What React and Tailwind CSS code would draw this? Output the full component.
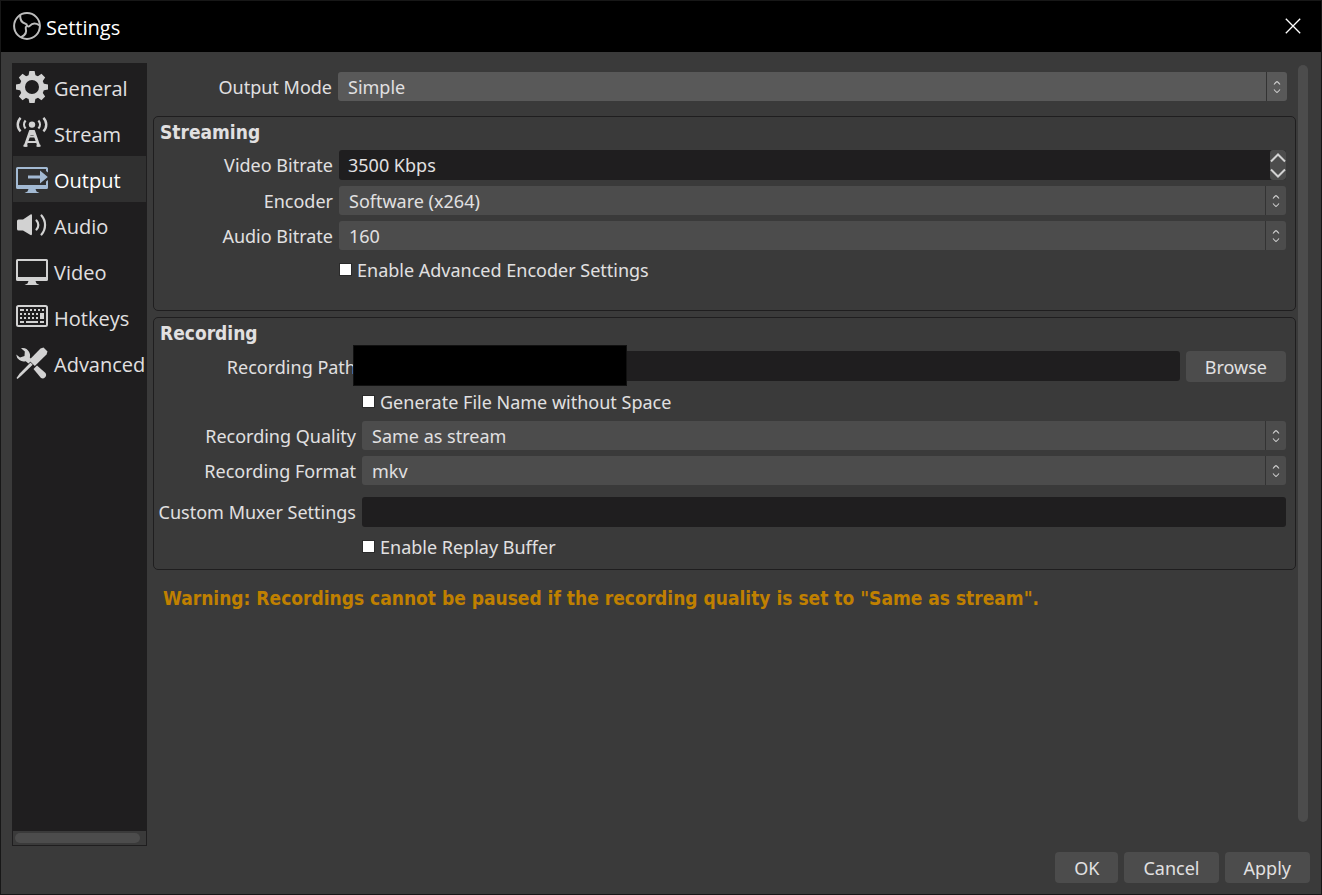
function ObsLogo() {
  return (
    <svg className="size-7 shrink-0" viewBox="0 0 28 28" fill="none" stroke="#bcbcbc" aria-hidden="true">
      <circle cx="14" cy="14" r="12.900" strokeWidth="2" />
      <g strokeWidth="2" strokeLinecap="round">
        <path d="M14 14Q14 12 12.500 11.700Q7 10.500 7.200 3.800" />
        <path d="M14 14Q14 12 12.500 11.700Q7 10.500 7.200 3.800" transform="rotate(120 14 14)" />
        <path d="M14 14Q14 12 12.500 11.700Q7 10.500 7.200 3.800" transform="rotate(240 14 14)" />
      </g>
    </svg>
  );
}

function GearIcon() {
  return (
    <svg className="size-8 shrink-0" viewBox="0 0 32 32" aria-hidden="true">
      <g fill="#d2d2d2">
        <path d="M13.4 0h5.2l1 5h-7.2zM13.4 32h5.2l1-5h-7.2z" />
        <path d="M13.4 0h5.2l1 5h-7.2zM13.4 32h5.2l1-5h-7.2z" transform="rotate(45 16 16)" />
        <path d="M13.4 0h5.2l1 5h-7.2zM13.4 32h5.2l1-5h-7.2z" transform="rotate(90 16 16)" />
        <path d="M13.4 0h5.2l1 5h-7.2zM13.4 32h5.2l1-5h-7.2z" transform="rotate(135 16 16)" />
      </g>
      <circle cx="16" cy="16" r="9.6" fill="none" stroke="#d2d2d2" strokeWidth="5.2" />
    </svg>
  );
}

function StreamIcon() {
  return (
    <svg className="size-8 shrink-0" viewBox="0 0 32 32" aria-hidden="true">
      <g fill="none" stroke="#d2d2d2" strokeWidth="2">
        <path d="M9.6 3.600a6 6 0 0 0 0 8M22.4 3.600a6 6 0 0 1 0 8" strokeWidth="2.200" />
        <path d="M4.600 .800a9.500 9.500 0 0 0 0 13.600M27.400 .800a9.500 9.500 0 0 1 0 13.600" strokeWidth="2.400" />
        <path d="M14.6 13.500L9 29.500M17.4 13.500L23 29.500" strokeWidth="2.8" />
        <path d="M13 19.500h6M11.5 25h9" strokeWidth="2" />
      </g>
      <path d="M14 13h4l1.4 5h-6.8zM7.5 27.800h4v2h-4zM20.5 27.800h4v2h-4z" fill="#d2d2d2" />
      <circle cx="16" cy="7.600" r="3.2" fill="#d2d2d2" />
    </svg>
  );
}

function OutputIcon() {
  return (
    <svg className="size-8 shrink-0" viewBox="0 0 32 32" aria-hidden="true">
      <g fill="#a3bad3">
        <path d="M1.5 4H30.500a1.500 1.500 0 0 1 1.500 1.500V9.500l-2-1.600V6H2v16h28v-3.500l2-1.600v7.600a1.500 1.500 0 0 1-1.500 1.500H1.500A1.500 1.500 0 0 1 0 24.500V5.500A1.500 1.500 0 0 1 1.500 4z" />
        <path d="M12 12.400h12V7.500l7.800 6.500-7.800 6.500v-4.900H12z" />
        <path d="M12.500 26h7l1 2.500 3 1.500H8.500l3-1.500z" />
      </g>
    </svg>
  );
}

function AudioIcon() {
  return (
    <svg className="size-8 shrink-0" viewBox="0 0 32 32" aria-hidden="true">
      <path d="M2.500 10.500H7L14.500 5.500Q16 4.800 16 6.500v18.500q0 1.600-1.500 1L7 21.500H2.500Q1 21.500 1 20V12q0-1.500 1.500-1.500z" fill="#d2d2d2" />
      <g fill="none" stroke="#d2d2d2" strokeWidth="2.200" strokeLinecap="round">
        <path d="M20.500 11.500a6.500 6.500 0 0 1 0 9" />
        <path d="M25.500 6.500a14.500 14.500 0 0 1 0 19" />
      </g>
    </svg>
  );
}

function VideoIcon() {
  return (
    <svg className="size-8 shrink-0" viewBox="0 0 32 32" aria-hidden="true">
      <path
        fillRule="evenodd"
        fill="#d2d2d2"
        d="M1.500 4h29A1.500 1.500 0 0 1 32 5.500v19a1.500 1.500 0 0 1-1.500 1.500h-29A1.500 1.500 0 0 1 0 24.500v-19A1.500 1.500 0 0 1 1.500 4zM2 6v16h28V6z"
      />
      <path d="M12.500 26h7l1 2.500 3 1.500H8.500l3-1.500z" fill="#d2d2d2" />
    </svg>
  );
}

function HotkeysIcon() {
  return (
    <svg className="size-8 shrink-0" viewBox="0 0 32 32" aria-hidden="true">
      <rect x="1" y="5" width="30" height="20" rx="1.500" fill="none" stroke="#d2d2d2" strokeWidth="2" />
      <path
        d="M4 8h4v2H4zM10 8h2v2h-2zM14 8h2v2h-2zM18 8h2v2h-2zM22 8h2v2h-2zM26 8h2v2h-2zM4 12h2v2H4zM8 12h2v2H8zM12 12h2v2h-2zM16 12h2v2h-2zM20 12h2v2h-2zM4 16h2v2H4zM8 16h2v2H8zM12 16h2v2h-2zM16 16h2v2h-2zM20 16h2v2h-2zM24 12h4v6h-4zM4 20h4v2H4zM10 20h12v2H10zM24 20h4v2h-4z"
        fill="#d2d2d2"
      />
    </svg>
  );
}

function AdvancedIcon() {
  return (
    <svg className="size-8 shrink-0" viewBox="0 0 32 32" aria-hidden="true">
      <g fill="#d2d2d2">
        <path d="M5 1.200A7.500 7.500 0 0 1 13.800 10.500L16 13l-3.500 3.500-2.800-2.300A7.500 7.500 0 0 1 .200 7.500L4 10.500 8.500 9 8.800 4.500z" />
        <path d="M21 18.500L29.500 26a3.500 3.500 0 0 1-4.500 5L17.500 22z" />
        <path d="M27.500 .500L31.500 4.500 30.500 7.500 18.800 19 13 13.200 24.500 1.500z" />
        <path d="M14.500 15.500l2.200 2.200L5.500 28.500 1.500 32 .500 31l3.200-4.500z" />
      </g>
    </svg>
  );
}

const sections = [
  { name: "General", Icon: GearIcon },
  { name: "Stream", Icon: StreamIcon },
  { name: "Output", Icon: OutputIcon, active: true },
  { name: "Audio", Icon: AudioIcon },
  { name: "Video", Icon: VideoIcon },
  { name: "Hotkeys", Icon: HotkeysIcon },
  { name: "Advanced", Icon: AdvancedIcon },
];

function Label({ htmlFor, children }) {
  return (
    <label htmlFor={htmlFor} className="justify-self-end whitespace-nowrap">
      {children}
    </label>
  );
}

function Select({ id, value, tone = "bg-[#4c4c4c]" }) {
  return (
    <div className={`relative flex h-[29px] min-w-0 overflow-hidden rounded-[3px] ${tone}`}>
      <select id={id} defaultValue={value} className="min-w-0 flex-1 appearance-none bg-transparent px-2.5 outline-none">
        <option>{value}</option>
      </select>
      <span className="pointer-events-none flex w-[21px] items-center justify-center border-l border-[#333333]">
        <svg className="h-3 w-2" viewBox="0 0 8 12" fill="none" stroke="#cfcfcf" strokeWidth="1.100" aria-hidden="true">
          <path d="M1 3.500Q3.300 .600 4 .600T7 3.500M1 8.500Q3.300 11.400 4 11.400T7 8.500" />
        </svg>
      </span>
    </div>
  );
}

function Check({ id, children }) {
  return (
    <div className="col-start-2 flex h-[27px] items-center gap-[5px]">
      <input
        id={id}
        type="checkbox"
        className="size-[13px] shrink-0 appearance-none border border-[#2a2a2a] bg-white checked:bg-[#a3bad3]"
      />
      <label htmlFor={id} className="whitespace-nowrap">{children}</label>
    </div>
  );
}

function Group({ title, className, children }) {
  return (
    <section className={`rounded-[5px] border border-[#1f1e1f] px-[9px] pt-1 ${className}`}>
      <h2 className="-ml-[3px] font-['DejaVu_Sans_Condensed','DejaVu_Sans',sans-serif] text-[19px] font-bold leading-[22px]">{title}</h2>
      {children}
    </section>
  );
}

function Button({ children }) {
  return (
    <button type="button" className="h-[31px] rounded-[4px] bg-[#4c4c4c] px-[19px] pt-px hover:bg-[#595959]">
      {children}
    </button>
  );
}

export default function App() {
  return (
    <div className="flex min-h-screen flex-col border border-[#171717] bg-[#3a3a3a] font-['Noto_Sans',sans-serif] text-[18px] leading-[22px] text-[#e1e0e1]">
      <header className="flex h-[51px] items-center gap-[5px] bg-black pr-5 pb-px pl-3 font-['Open_Sans',sans-serif] text-[20px] text-white">
        <ObsLogo />
        <h1 className="flex-1 pt-1">Settings</h1>
        <button type="button" aria-label="Close" className="flex size-4 items-center justify-center">
          <svg className="size-4" viewBox="0 0 16 16" stroke="#ffffff" strokeWidth="1.300" aria-hidden="true">
            <path d="M.800 .800l14.400 14.400M15.200 .800L.800 15.200" />
          </svg>
        </button>
      </header>

      <div className="flex flex-1 gap-1.5 pt-[11px] pl-[11px]">
        <nav className="mb-[48px] flex w-[135px] shrink-0 flex-col overflow-hidden border border-[#1f1e1f] bg-[#1f1e1f] font-['Open_Sans',sans-serif] text-[20px]">
          {sections.map(({ name, Icon, active }) => (
            <a
              key={name}
              href={`#${name.toLowerCase()}`}
              aria-current={active ? "page" : undefined}
              className={`flex h-[46px] items-center gap-1.5 pl-[3px] ${active ? "bg-[#303030] text-white" : ""}`}
            >
              <Icon />
              <span className="pt-[3px] whitespace-nowrap">{name}</span>
            </a>
          ))}
          <div className="mt-auto bg-[#3a3a3a] py-0.5 pr-1.5 pl-0.5">
            <div className="h-2.5 rounded-full bg-[#4c4c4c]" />
          </div>
        </nav>

        <main className="flex min-w-0 flex-1 flex-col">
          <div className="flex flex-1 gap-0.5 pr-[13px]">
            <form className="min-w-0 flex-1 pt-[9px]">
              <div className="mr-[9px] grid grid-cols-[179px_minmax(0,1fr)] items-center gap-x-1.5">
                <Label htmlFor="mode">Output Mode</Label>
                <Select id="mode" value="Simple" tone="bg-[#595959]" />
              </div>

              <Group title="Streaming" className="mt-[15px] pb-[27px]">
                <div className="mt-[7px] grid grid-cols-[170px_minmax(0,1fr)] items-center gap-x-1.5 gap-y-1.5">
                  <Label htmlFor="vbitrate">Video Bitrate</Label>
                  <div className="flex h-[30px] overflow-hidden rounded-[3px] bg-[#1f1e1f]">
                    <input
                      id="vbitrate"
                      type="text"
                      defaultValue="3500 Kbps"
                      className="min-w-0 flex-1 bg-transparent px-[9px] outline-none"
                    />
                    <div className="flex w-4 flex-col rounded-[3px] bg-[#4c4c4c]">
                      <button type="button" aria-label="Increase" className="flex flex-1 items-center justify-center">
                        <svg className="h-2.5 w-4" viewBox="0 0 16 10" fill="none" stroke="#d2d2d2" strokeWidth="2" aria-hidden="true">
                          <path d="M1 8.500L8 1.500L15 8.500" />
                        </svg>
                      </button>
                      <button type="button" aria-label="Decrease" className="flex flex-1 items-center justify-center">
                        <svg className="h-2.5 w-4" viewBox="0 0 16 10" fill="none" stroke="#d2d2d2" strokeWidth="2" aria-hidden="true">
                          <path d="M1 1.500L8 8.500L15 1.500" />
                        </svg>
                      </button>
                    </div>
                  </div>
                  <Label htmlFor="encoder">Encoder</Label>
                  <Select id="encoder" value="Software (x264)" />
                  <Label htmlFor="abitrate">Audio Bitrate</Label>
                  <Select id="abitrate" value="160" />
                  <Check id="advenc">Enable Advanced Encoder Settings</Check>
                </div>
              </Group>

              <Group title="Recording" className="mt-1.5 pb-[9px]">
                <div className="mt-[7px] grid grid-cols-[193px_minmax(0,1fr)] items-center gap-x-1.5 gap-y-1.5">
                  <Label htmlFor="path">Recording Path</Label>
                  <div className="flex gap-1.5">
                    <div className="relative flex min-w-0 flex-1">
                      <input id="path" type="text" className="h-[30px] w-full rounded-[3px] bg-[#1f1e1f] px-[9px] outline-none" />
                      <div className="absolute -top-1.5 -left-[9px] h-[41px] w-[274px] border border-[#111111] bg-black" />
                    </div>
                    <Button>Browse</Button>
                  </div>
                  <Check id="nospace">Generate File Name without Space</Check>
                  <Label htmlFor="quality">Recording Quality</Label>
                  <Select id="quality" value="Same as stream" />
                  <Label htmlFor="format">Recording Format</Label>
                  <Select id="format" value="mkv" />
                </div>
                <div className="mt-3 grid grid-cols-[193px_minmax(0,1fr)] items-center gap-x-1.5 gap-y-1.5">
                  <Label htmlFor="muxer">Custom Muxer Settings</Label>
                  <input id="muxer" type="text" className="h-[30px] w-full rounded-[3px] bg-[#1f1e1f] px-[9px] outline-none" />
                  <Check id="replay">Enable Replay Buffer</Check>
                </div>
              </Group>

              <p className="mt-[17px] pl-2.5 font-['DejaVu_Sans_Condensed','DejaVu_Sans',sans-serif] text-[19px] font-bold text-[#c08000]">
                Warning: Recordings cannot be paused if the recording quality is set to "Same as stream".
              </p>
            </form>
            <div className="mt-0.5 mb-[30px] w-2.5 rounded-full bg-[#4c4c4c]" />
          </div>

          <footer className="flex justify-end gap-1.5 pr-[11px] pb-[11px]">
            <Button>OK</Button>
            <Button>Cancel</Button>
            <Button>Apply</Button>
          </footer>
        </main>
      </div>
    </div>
  );
}
